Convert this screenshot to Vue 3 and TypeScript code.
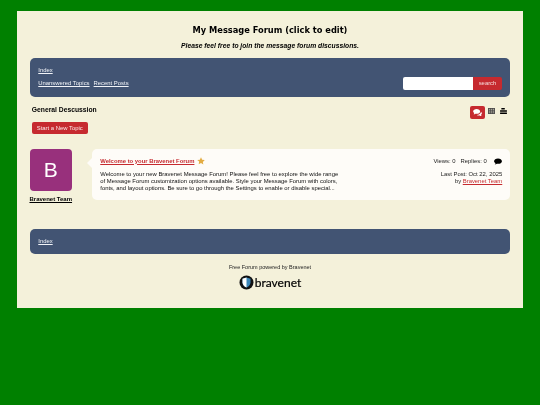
<script setup lang="ts">
const navTop: string[] = ['Unanswered Topics', 'Recent Posts']
</script>

<template>
  <div class="page">
    <main class="panel">
      <h1 class="title">My Message Forum (click to edit)</h1>
      <p class="tagline">Please feel free to join the message forum discussions.</p>

      <nav class="bar top">
        <a class="link crumb">Index</a>
        <div class="bar-row">
          <div class="links">
            <a v-for="n in navTop" :key="n" class="link">{{ n }}</a>
          </div>
          <form class="search" @submit.prevent>
            <input class="search-input" type="text" />
            <button class="search-btn">search</button>
          </form>
        </div>
      </nav>

      <div class="section">
        <div class="section-left">
          <h2 class="section-title">General Descussion</h2>
          <button class="new-topic">Start a New Topic</button>
        </div>
        <div class="views">
          <span class="view active">
            <svg width="9" height="7" viewBox="0 0 20 16"><path fill="#fff" d="M8 0c4.400 0 8 2.500 8 5.500S12.400 11 8 11c-.9 0-1.700-.1-2.500-.3C4.300 11.600 2.800 12 1 12c.8-.8 1.400-1.800 1.500-2.800C.9 8.200 0 6.900 0 5.500 0 2.500 3.600 0 8 0z"/><path fill="#fff" d="M18 6.500c1.300 1 2 2.200 2 3.500 0 1.300-.8 2.500-2.100 3.400.1 1 .7 1.900 1.400 2.600-1.600 0-3-.4-4.100-1.200-.7.200-1.400.2-2.200.2-1.800 0-3.400-.5-4.700-1.300 4.900-.1 9.400-2.500 9.700-7.200z"/></svg>
          </span>
          <svg class="view-icon" width="7" height="6" viewBox="0 0 16 14"><path fill="#444" d="M0 0h16v14H0z"/><path fill="#f4f1da" opacity=".55" d="M2 2h3v2.500H2zM6.500 2h3v2.500h-3zM11 2h3v2.500h-3zM2 6h3v2.500H2zM6.500 6h3v2.500h-3zM11 6h3v2.500h-3zM2 10h3v2.500H2zM6.500 10h3v2.500h-3zM11 10h3v2.500h-3z"/></svg>
          <svg class="view-icon" width="7" height="6" viewBox="0 0 16 14"><path fill="#000" d="M3 0h8v3.400H3zM0 5.300h16v3.400H0zM0 10.600h16V14H0z"/></svg>
        </div>
      </div>

      <section class="topic">
        <div class="author">
          <div class="avatar">B</div>
          <a class="author-name">Bravenet Team</a>
        </div>
        <article class="card">
          <div class="card-main">
            <div class="card-head">
              <a class="topic-link">Welcome to your Bravenet Forum</a>
              <svg width="8" height="8" viewBox="0 0 24 24"><path fill="#e3ac42" d="M12 1l3.400 7.300 7.900 1-5.800 5.400 1.500 7.900L12 17.700l-7 3.900 1.500-7.900L.7 9.300l7.900-1z"/></svg>
            </div>
            <p class="excerpt">Welcome to your new Bravenet Message Forum! Please feel free to explore the wide range of Message Forum customization options available. Style your Message Forum with colors, fonts, and layout options. Be sure to go through the Settings to enable or disable special...</p>
          </div>
          <div class="card-side">
            <div class="stats">
              <span>Views: 0</span><span>Replies: 0</span>
              <svg width="8" height="7" viewBox="0 0 18 16"><path fill="#000" d="M9 1c5 0 9 2.800 9 6.200s-4 6.200-9 6.200c-.9 0-1.700-.1-2.500-.3C5.200 14.200 3.500 15 1.500 15c.9-.9 1.600-2 1.700-3.200C1.200 10.700 0 9 0 7.200 0 3.800 4 1 9 1z"/></svg>
            </div>
            <div class="last">Last Post: Oct 22, 2025</div>
            <div class="last">by <a class="last-link">Bravenet Team</a></div>
          </div>
        </article>
      </section>

      <nav class="bar bottom">
        <a class="link">Index</a>
      </nav>

      <footer class="foot">
        <div class="powered">Free Forum powered by Bravenet</div>
        <div class="logo">
          <svg width="15" height="15" viewBox="0 0 30 30">
            <circle cx="15" cy="15" r="14" fill="#111"/>
            <path fill="#3b86b8" d="M7 7.500l8-2.500 8 2.500v7.500c0 4.500-3.500 8-8 10.200C10.500 23 7 19.500 7 15z"/>
            <path fill="#fff" d="M15 5v20.200C10.500 23 7 19.500 7 15V7.500z"/>
          </svg>
          <span class="logo-text">bravenet</span>
        </div>
      </footer>
    </main>
  </div>
</template>

<style>
html, body { margin: 0; background: #008000; }
</style>

<style scoped>
.page {
  min-height: 405px;
  box-sizing: border-box;
  padding: 11px 17px 0;
  background: #008000;
  font-family: "Liberation Sans", Arial, sans-serif;
  color: #222;
}
.panel {
  height: 297px;
  box-sizing: border-box;
  padding: 13px 12.750px 0;
  background: #f4f1da;
  filter: blur(0.35px);
}
.title {
  margin: 0;
  height: 12px;
  font: bold 9.200px/12px "DejaVu Sans Condensed", "DejaVu Sans", sans-serif;
  font-stretch: condensed;
  color: #000;
  text-align: center;
}
.tagline {
  margin: 5px 0 0;
  height: 9px;
  font: italic bold 6.750px/9px "Liberation Sans", sans-serif;
  color: #000;
  text-align: center;
}
.bar {
  box-sizing: border-box;
  background: #425473;
  border-radius: 5px;
  padding: 0 8.500px;
}
.bar.top {
  height: 39px;
  margin-top: 8px;
  padding-top: 7.500px;
}
.link {
  font-size: 5.900px;
  line-height: 8px;
  color: #f2f4f8;
  text-decoration: underline;
}
.crumb { display: block; }
.bar-row {
  display: flex;
  justify-content: space-between;
  align-items: flex-start;
  margin-top: 3px;
}
.links { display: flex; gap: 4px; padding-top: 2.500px; }
.search { display: flex; margin: 0; }
.search-input {
  box-sizing: border-box;
  width: 70px;
  height: 13px;
  padding: 0;
  border: 0;
  border-radius: 2px 0 0 2px;
  background: #fff;
}
.search-btn {
  width: 28.500px;
  height: 13px;
  padding: 0;
  border: 0;
  border-radius: 0 2px 2px 0;
  background: #c62a2f;
  color: #f6dcdc;
  font: 5.900px "Liberation Sans", sans-serif;
}
.section {
  display: flex;
  justify-content: space-between;
  align-items: flex-start;
  padding: 7.500px 3px 0 2px;
}
.section-title {
  margin: 0;
  height: 9px;
  font: bold 6.750px/9px "Liberation Sans", sans-serif;
  color: #000;
}
.new-topic {
  display: block;
  margin-top: 8.500px;
  width: 56px;
  height: 12px;
  padding: 0;
  border: 0;
  border-radius: 2px;
  background: #c62a2f;
  color: #fbeaea;
  font: 5.900px "Liberation Sans", sans-serif;
}
.views {
  display: flex;
  align-items: flex-start;
  gap: 5px;
  margin-top: 1px;
}
.view {
  display: flex;
  align-items: center;
  justify-content: center;
  width: 15px;
  height: 13px;
  margin-right: -1.500px;
  border-radius: 2px;
  background: #c62a2f;
}
.view-icon { margin-top: 2px; }
.topic {
  display: flex;
  align-items: flex-start;
  margin-top: 15px;
  gap: 20.500px;
}
.author {
  display: flex;
  flex-direction: column;
  align-items: center;
  width: 42px;
  flex: none;
}
.avatar {
  width: 42px;
  height: 42px;
  border-radius: 4px;
  background: #98307c;
  color: #fff;
  font: 21px/42px "Liberation Sans", sans-serif;
  text-align: center;
}
.author-name {
  margin-top: 4px;
  font: bold 6px/8px "Liberation Sans", sans-serif;
  color: #000;
  text-decoration: underline;
  white-space: nowrap;
}
.card {
  position: relative;
  flex: 1;
  display: flex;
  justify-content: space-between;
  height: 51px;
  box-sizing: border-box;
  padding: 7.500px 8px 0;
  border-radius: 5px;
  background: #fefcf8;
}
.card::before {
  content: "";
  position: absolute;
  left: -5px;
  top: 9px;
  border: 5px solid transparent;
  border-left: 0;
  border-right-color: #fefcf8;
}
.card-main { width: 241px; }
.card-head {
  display: flex;
  align-items: center;
  gap: 3px;
  height: 9px;
}
.topic-link {
  font: bold 5.900px/9px "Liberation Sans", sans-serif;
  color: #c62a2f;
  text-decoration: underline;
}
.excerpt {
  margin: 5.500px 0 0;
  font-size: 5.900px;
  line-height: 6.750px;
  color: #111;
}
.card-side {
  text-align: right;
  font-size: 5.900px;
  line-height: 6.750px;
  color: #222;
}
.stats {
  display: flex;
  justify-content: flex-end;
  align-items: center;
  gap: 5px;
  height: 9px;
  margin-bottom: 5.500px;
}
.stats svg { margin: 0 0.500px 0 2px; }
.last-link {
  color: #c62a2f;
  text-decoration: underline;
}
.bar.bottom {
  display: flex;
  align-items: center;
  height: 25.500px;
  margin-top: 25.500px;
}
.foot {
  margin-top: 9.500px;
  text-align: center;
}
.powered {
  font-size: 5.500px;
  line-height: 7px;
  color: #222;
}
.logo {
  display: flex;
  justify-content: center;
  align-items: center;
  gap: 1px;
  margin-top: 4.500px;
}
.logo-text {
  font: 12px/15px "Lato", sans-serif;
  color: #000;
  -webkit-text-stroke: 0.200px currentColor;
}
</style>
